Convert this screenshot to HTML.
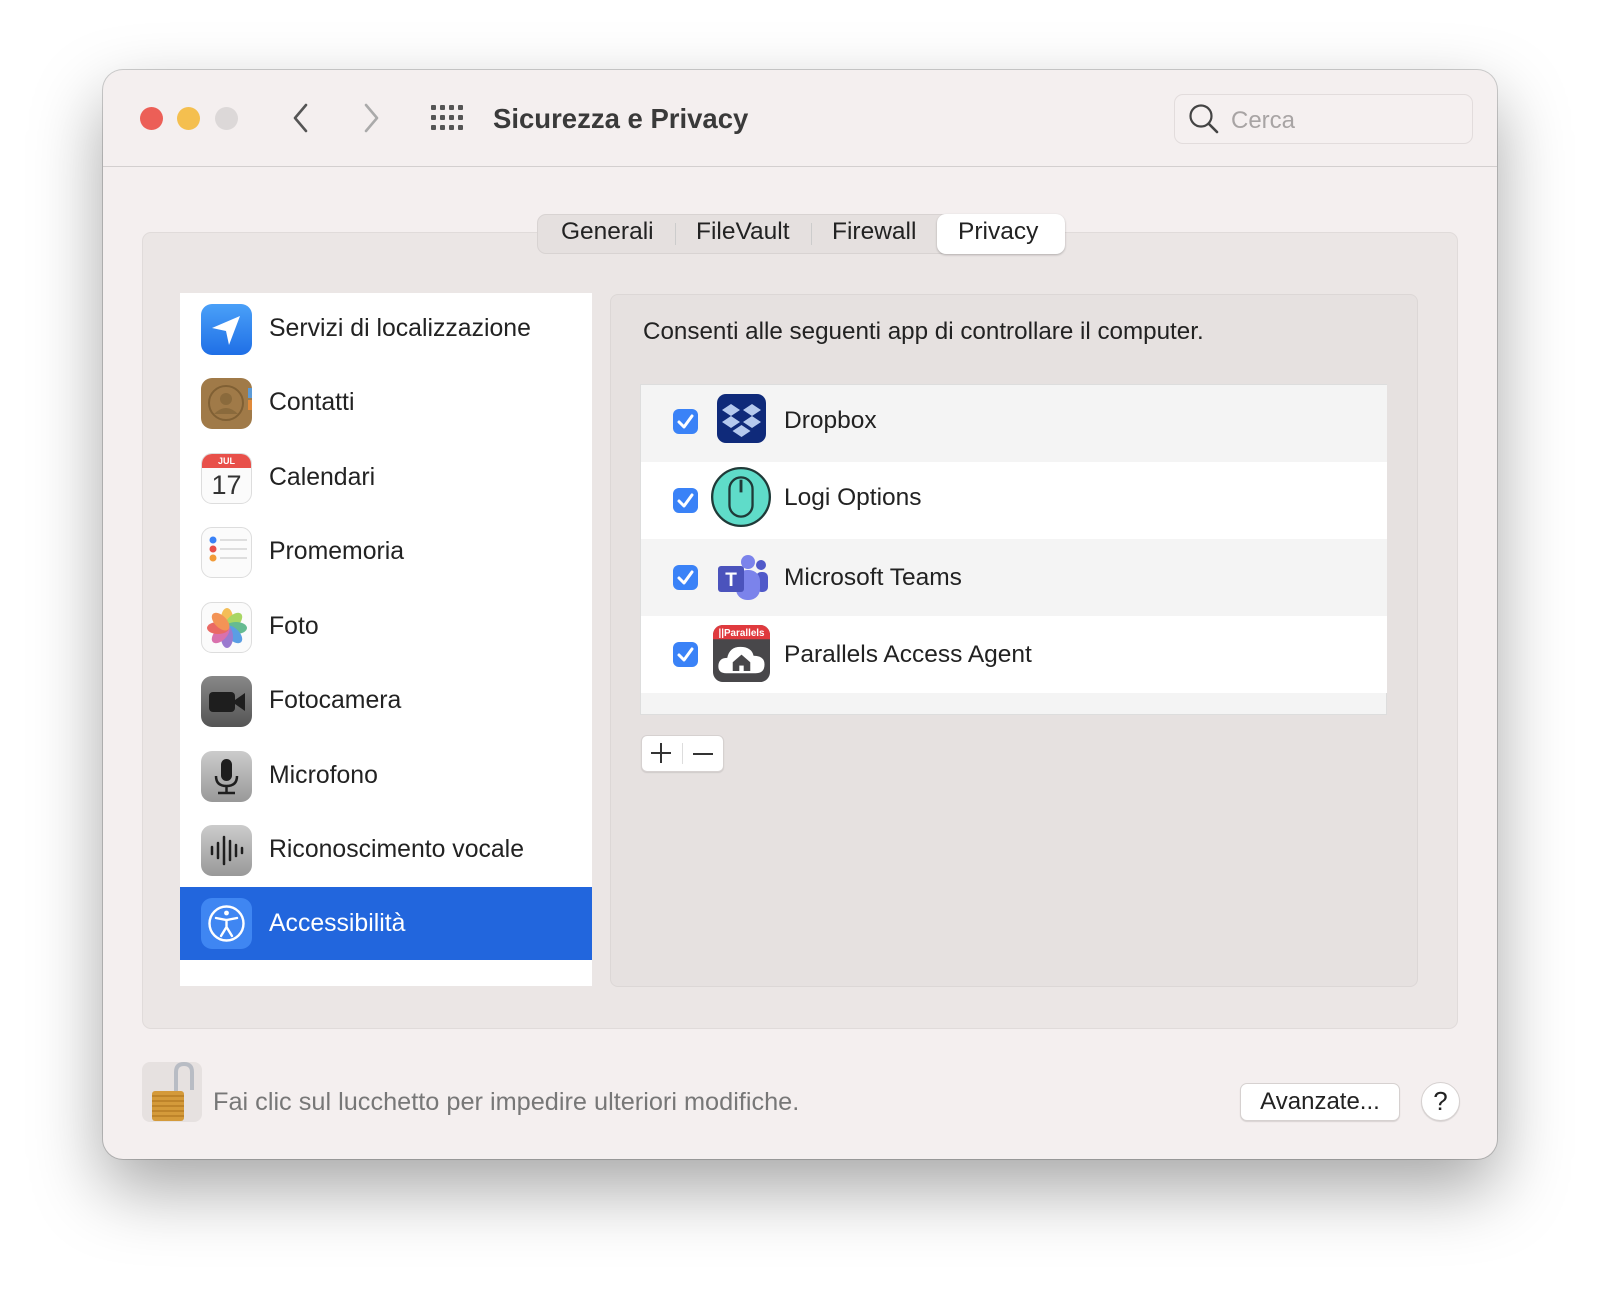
<!DOCTYPE html>
<html><head><meta charset="utf-8"><style>
*{margin:0;padding:0;box-sizing:border-box}
body{width:1600px;height:1297px;background:#fff;font-family:"Liberation Sans",sans-serif;position:relative;overflow:hidden;color:#222}
.a{position:absolute}
.win{left:103px;top:70px;width:1394px;height:1089px;border-radius:20px;background:#f4efef;box-shadow:0 30px 70px rgba(0,0,0,.35),0 0 0 1px rgba(0,0,0,.18);overflow:hidden}
.tl{width:23px;height:23px;border-radius:50%;top:107px}
.row{position:absolute;left:180px;width:412px;height:74px}
.row .ic{position:absolute;left:21px;top:12px;width:51px;height:51px;border-radius:11px}
.row .t{position:absolute;left:89px;top:0;line-height:74px;font-size:24.8px;color:#222}
.tr{position:absolute;left:641px;width:746px;height:77px}
.cb{position:absolute;left:32px;top:26px;width:25px;height:25px;border-radius:6px;background:#3a82f7}
.tr .t{position:absolute;left:143px;line-height:77px;font-size:24.5px}
.ai{position:absolute;left:75px;top:13px;width:52px;height:52px}
</style></head><body>
<div class="a win"></div>
<div class="a" style="left:103px;top:166px;width:1394px;height:1px;background:#d3cfcf"></div>
<div class="a tl" style="left:140px;background:#ec5f57"></div>
<div class="a tl" style="left:177px;background:#f4bf4f"></div>
<div class="a tl" style="left:215px;background:#dcd8d8"></div>
<svg class="a" style="left:290px;top:102px" width="24" height="32"><path d="M16 3 L5 16 L16 29" fill="none" stroke="#555" stroke-width="2.6" stroke-linecap="round" stroke-linejoin="round"/></svg>
<svg class="a" style="left:360px;top:102px" width="24" height="32"><path d="M6 3 L17 16 L6 29" fill="none" stroke="#aaa" stroke-width="2.6" stroke-linecap="round" stroke-linejoin="round"/></svg>
<svg class="a" style="left:431px;top:105px" width="34" height="26" fill="#555">
<g id="r"><rect x="0" y="0" width="5" height="5" rx="1"/><rect x="9" y="0" width="5" height="5" rx="1"/><rect x="18" y="0" width="5" height="5" rx="1"/><rect x="27" y="0" width="5" height="5" rx="1"/></g>
<use href="#r" y="10"/><use href="#r" y="20"/></svg>
<div class="a" style="left:493px;top:103px;font-size:27.5px;font-weight:bold;color:#3a3a3a">Sicurezza e Privacy</div>
<div class="a" style="left:1174px;top:94px;width:299px;height:50px;border:1px solid #e2dcdc;border-radius:9px;background:#f5f0f0"></div>
<svg class="a" style="left:1188px;top:103px" width="32" height="32"><circle cx="13" cy="13" r="10.5" fill="none" stroke="#444" stroke-width="2.2"/><path d="M21 21 L29 29" stroke="#444" stroke-width="2.6" stroke-linecap="round"/></svg>
<div class="a" style="left:1231px;top:107px;font-size:24px;color:#a8a4a4">Cerca</div>

<div class="a" style="left:142px;top:232px;width:1316px;height:797px;background:#ebe6e5;border:1px solid #e0dbda;border-radius:9px"></div>
<div class="a" style="left:537px;top:214px;width:528px;height:40px;background:#e5e0df;border:1px solid #d8d3d2;border-radius:9px"></div>
<div class="a" style="left:937px;top:214px;width:128px;height:40px;background:#fff;border-radius:9px;box-shadow:0 1px 2px rgba(0,0,0,.25)"></div>
<div class="a" style="left:675px;top:223px;width:1px;height:22px;background:#ccc"></div>
<div class="a" style="left:811px;top:223px;width:1px;height:22px;background:#ccc"></div>
<div class="a" style="left:537px;top:212px;width:528px;line-height:40px;font-size:24.5px;color:#222">
<span class="a" style="left:24px">Generali</span><span class="a" style="left:159px">FileVault</span><span class="a" style="left:295px">Firewall</span><span class="a" style="left:421px">Privacy</span></div>

<div class="a" style="left:180px;top:293px;width:412px;height:693px;background:#fff"></div>
<div class="row" style="top:292px"><div class="ic" style="background:linear-gradient(#4aa0f8,#1f6fe6)"><svg width="51" height="51"><path d="M39 12 L11 24 L25 27 L28 41 Z" fill="#fff"/></svg></div><div class="t">Servizi di localizzazione</div></div>
<div class="row" style="top:366px"><div class="ic" style="background:#a07a48"><svg width="51" height="51"><circle cx="25" cy="25" r="17" fill="none" stroke="#806034" stroke-width="2"/><circle cx="25" cy="21" r="6" fill="#8a6a3c"/><path d="M13 36 Q25 24 37 36" fill="#8a6a3c"/><rect x="47" y="10" width="4" height="10" fill="#5c9ad6"/><rect x="47" y="22" width="4" height="10" fill="#e08a3a"/></svg></div><div class="t">Contatti</div></div>
<div class="row" style="top:441px"><div class="ic" style="background:#fbfbfb;border:1px solid #ddd;overflow:hidden"><div style="height:14px;background:#e8504a;color:#fff;font-size:9px;text-align:center;font-weight:bold;line-height:14px">JUL</div><div style="text-align:center;font-size:27px;line-height:34px;color:#333">17</div></div><div class="t">Calendari</div></div>
<div class="row" style="top:515px"><div class="ic" style="background:#fbfbfb;border:1px solid #ddd"><svg width="51" height="51"><circle cx="11" cy="12" r="3.5" fill="#3a82f7"/><circle cx="11" cy="21" r="3.5" fill="#e8504a"/><circle cx="11" cy="30" r="3.5" fill="#f29b38"/><path d="M18 12H45M18 21H45M18 30H45" stroke="#ccc" stroke-width="1.2"/></svg></div><div class="t">Promemoria</div></div>
<div class="row" style="top:590px"><div class="ic" style="background:#fbfbfb;border:1px solid #ddd"><svg width="51" height="51"><g transform="translate(25 25)" opacity=".85"><ellipse rx="6" ry="11" cy="-9" fill="#f3b43b"/><ellipse rx="6" ry="11" cy="-9" fill="#9ad04a" transform="rotate(45)"/><ellipse rx="6" ry="11" cy="-9" fill="#4bb07f" transform="rotate(90)"/><ellipse rx="6" ry="11" cy="-9" fill="#3f8ee0" transform="rotate(135)"/><ellipse rx="6" ry="11" cy="-9" fill="#8a64c8" transform="rotate(180)"/><ellipse rx="6" ry="11" cy="-9" fill="#d45aa0" transform="rotate(225)"/><ellipse rx="6" ry="11" cy="-9" fill="#e8504a" transform="rotate(270)"/><ellipse rx="6" ry="11" cy="-9" fill="#f2823a" transform="rotate(315)"/></g></svg></div><div class="t">Foto</div></div>
<div class="row" style="top:664px"><div class="ic" style="background:linear-gradient(#888,#555)"><svg width="51" height="51"><rect x="8" y="16" width="26" height="20" rx="4" fill="#1e1e1e"/><path d="M34 24 L44 17 V35 L34 28Z" fill="#1e1e1e"/></svg></div><div class="t">Fotocamera</div></div>
<div class="row" style="top:739px"><div class="ic" style="background:linear-gradient(#ccc,#999)"><svg width="51" height="51"><rect x="20" y="8" width="11" height="22" rx="5.5" fill="#1e1e1e"/><path d="M15 25 Q15 35 25.5 35 Q36 35 36 25M25.5 35V42M17 42H34" fill="none" stroke="#1e1e1e" stroke-width="2.5"/></svg></div><div class="t">Microfono</div></div>
<div class="row" style="top:813px"><div class="ic" style="background:linear-gradient(#ccc,#999)"><svg width="51" height="51" stroke="#1e1e1e" stroke-width="2.5" stroke-linecap="round"><path d="M11 22V29M17 18V33M23 12V39M29 16V35M35 20V31M41 23V28"/></svg></div><div class="t">Riconoscimento vocale</div></div>
<div class="row" style="top:887px;background:#2266dd;height:73px"><div class="ic" style="background:#3f86f2;top:11px"><svg width="51" height="51" fill="none" stroke="#fff" stroke-width="2.4" stroke-linecap="round"><circle cx="25.5" cy="25.5" r="17"/><circle cx="25.5" cy="15" r="2.4" fill="#fff" stroke="none"/><path d="M15 20 L25.5 22 L36 20M25.5 22V29L20 38M25.5 29L31 38"/></svg></div><div class="t" style="color:#fff;line-height:73px">Accessibilità</div></div>

<div class="a" style="left:610px;top:294px;width:808px;height:693px;background:#e6e1e0;border:1px solid #dcd7d6;border-radius:8px"></div>
<div class="a" style="left:643px;top:318px;font-size:24.2px;color:#222">Consenti alle seguenti app di controllare il computer.</div>
<div class="a" style="left:640px;top:384px;width:747px;height:331px;background:#f2f2f2;border:1px solid #ddd"></div>
<div class="tr" style="top:385px;background:#f4f4f4"><div class="cb" style="top:24px"><svg width="25" height="25"><path d="M6 13 L11 18 L19 7" fill="none" stroke="#fff" stroke-width="3" stroke-linecap="round" stroke-linejoin="round"/></svg></div><div class="ai" style="left:76px;top:9px;width:49px;height:49px;background:#0f2a7a;border-radius:9px"><svg width="49" height="49" fill="#b5c9ee"><path d="M14 10l9 6-9 6-9-6zM35 10l9 6-9 6-9-6zM14 22l9 6-9 6-9-6zM35 22l9 6-9 6-9-6zM24.5 31l9 6-9 6-9-6z"/></svg></div><div class="t" style="line-height:72px">Dropbox</div></div>
<div class="tr" style="top:462px;background:#fff"><div class="cb"><svg width="25" height="25"><path d="M6 13 L11 18 L19 7" fill="none" stroke="#fff" stroke-width="3" stroke-linecap="round" stroke-linejoin="round"/></svg></div><svg class="ai" viewBox="0 0 52 52" style="left:70px;top:5px;width:60px;height:60px"><circle cx="26" cy="26" r="25" fill="#5fdcc9" stroke="#1f3a38" stroke-width="2"/><rect x="16" y="9" width="20" height="34" rx="10" fill="none" stroke="#1f3a38" stroke-width="2"/><path d="M26 11V22" stroke="#1f3a38" stroke-width="2.5"/></svg><div class="t" style="line-height:72px">Logi Options</div></div>
<div class="tr" style="top:539px;background:#f4f4f4"><div class="cb"><svg width="25" height="25"><path d="M6 13 L11 18 L19 7" fill="none" stroke="#fff" stroke-width="3" stroke-linecap="round" stroke-linejoin="round"/></svg></div><svg class="ai" viewBox="0 0 52 52"><circle cx="32" cy="10" r="7" fill="#7b83eb"/><circle cx="45" cy="13" r="5" fill="#5059c9"/><rect x="40" y="20" width="12" height="20" rx="5" fill="#5059c9"/><rect x="20" y="18" width="24" height="30" rx="11" fill="#7b83eb"/><rect x="2" y="14" width="26" height="26" rx="3" fill="#4b53bc"/><text x="15" y="34" font-size="19" font-weight="bold" fill="#fff" text-anchor="middle" font-family="Liberation Sans">T</text></svg><div class="t">Microsoft Teams</div></div>
<div class="tr" style="top:616px;background:#fff"><div class="cb"><svg width="25" height="25"><path d="M6 13 L11 18 L19 7" fill="none" stroke="#fff" stroke-width="3" stroke-linecap="round" stroke-linejoin="round"/></svg></div><svg class="ai" viewBox="0 0 52 52" style="top:9px;width:57px;height:57px;left:72px"><rect x="0" y="0" width="52" height="52" rx="9" fill="#48474a"/><path d="M9 0H43A9 9 0 0 1 52 9V13H0V9A9 9 0 0 1 9 0Z" fill="#e03a3e"/><text x="26" y="10" font-size="9" fill="#fff" text-anchor="middle" font-family="Liberation Sans" font-weight="bold">||Parallels</text><path d="M12 44 Q4 44 5 36 Q6 30 13 30 Q15 20 25 20 Q35 20 37 28 Q47 28 47 36 Q47 44 39 44Z" fill="#fff"/><path d="M18 34L26 27L34 34V42H18Z" fill="#48474a"/><rect x="24" y="37" width="4" height="5" fill="#fff"/></svg><div class="t">Parallels Access Agent</div></div>
<div class="a" style="left:641px;top:693px;width:745px;height:21px;background:#f4f4f4"></div>

<div class="a" style="left:641px;top:735px;width:83px;height:37px;background:#fff;border:1px solid #d6d1d0;border-radius:6px;box-shadow:0 1px 1px rgba(0,0,0,.1)"></div>
<div class="a" style="left:682px;top:743px;width:1px;height:21px;background:#ddd"></div>
<div class="a" style="left:651px;top:752px;width:20px;height:2px;background:#333"></div>
<div class="a" style="left:660px;top:743px;width:2px;height:20px;background:#333"></div>
<div class="a" style="left:693px;top:753px;width:20px;height:2px;background:#333"></div>

<div class="a" style="left:142px;top:1062px;width:60px;height:60px;background:#e6e1e0;border-radius:8px"></div>
<svg class="a" style="left:142px;top:1062px" width="60" height="60"><path d="M34 30V10Q34 2 42 2Q50 2 50 10V28" fill="none" stroke="#b8bcc4" stroke-width="4"/><rect x="10" y="29" width="32" height="30" rx="3" fill="#d49a3a"/><path d="M10 34H42M10 39H42M10 44H42M10 49H42M10 54H42" stroke="#b07822" stroke-width="1.2"/></svg>
<div class="a" style="left:213px;top:1088px;font-size:25.3px;color:#777">Fai clic sul lucchetto per impedire ulteriori modifiche.</div>
<div class="a" style="left:1240px;top:1083px;width:160px;height:38px;background:#fff;border:1px solid #d6d1d0;border-radius:7px;box-shadow:0 1px 1px rgba(0,0,0,.12);text-align:center;line-height:36px;font-size:24px;color:#222">Avanzate...</div>
<div class="a" style="left:1421px;top:1082px;width:39px;height:39px;border-radius:50%;background:#fff;border:1px solid #d6d1d0;box-shadow:0 1px 1px rgba(0,0,0,.12);text-align:center;line-height:37px;font-size:26px;color:#222">?</div>
</body></html>
